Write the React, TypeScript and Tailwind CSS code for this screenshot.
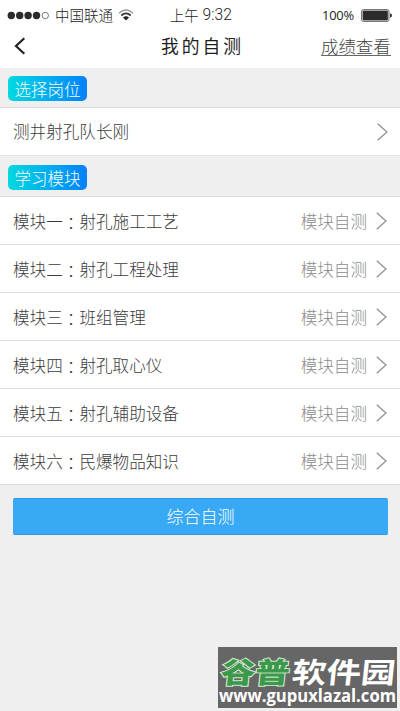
import React from "react";

const modules = [
  ["模块一", "射孔施工工艺"],
  ["模块二", "射孔工程处理"],
  ["模块三", "班组管理"],
  ["模块四", "射孔取心仪"],
  ["模块五", "射孔辅助设备"],
  ["模块六", "民爆物品知识"],
];

function Arrow() {
  return (
    <svg className="h-[18px] w-[11px] shrink-0" viewBox="0 0 11 18" fill="none" stroke="#8f8f8f" strokeWidth="1.2">
      <path d="M0.7 0.7 10 9 0.7 17.3" />
    </svg>
  );
}

function Tag({ children }: { children: React.ReactNode }) {
  return (
    <span className="flex h-[25px] w-[79px] items-center justify-center rounded-[5px] bg-linear-to-r from-[#08d8df] to-[#0c80fa] pt-px text-[16.5px] leading-none text-white">
      {children}
    </span>
  );
}

function StatusBar() {
  return (
    <div className="flex h-[30px] items-center pl-[7px] text-[#222]">
      <svg className="h-[9px] w-[42px]" viewBox="0 0 42 9" fill="#2b2b2b">
        <circle cx="4.3" cy="4.5" r="3.7" />
        <circle cx="12.7" cy="4.5" r="3.7" />
        <circle cx="21.1" cy="4.5" r="3.7" />
        <circle cx="29.5" cy="4.5" r="3.7" />
        <circle cx="38.3" cy="4.5" r="3.2" fill="none" stroke="#555" strokeWidth="0.8" />
      </svg>
      <span className="ml-[6px] w-[59px] whitespace-nowrap text-[14.5px] leading-none">中国联通</span>
      <svg className="ml-[4px] h-[12px] w-[16px]" viewBox="0 0 16 12" fill="none">
        <path d="M1 4.2Q8-2.2 15 4.2" stroke="#999" strokeWidth="1.4" />
        <path d="M3.3 6.5Q8 2.2 12.7 6.5" stroke="#333" strokeWidth="1.7" />
        <path d="M5 8.4Q8 6 11 8.4L8 11.6Z" fill="#222" />
      </svg>
      <span className="ml-[36px] flex w-[64px] items-center whitespace-nowrap text-[14.3px] leading-none">
        上午
        <span className="ml-[4px] pt-[2px] font-['Roboto',sans-serif] text-[15.6px]">9:32</span>
      </span>
      <span className="ml-[88px] w-[34px] whitespace-nowrap pt-px font-['Open_Sans',sans-serif] text-[12.9px] leading-none font-normal tracking-[-0.2px]">100%</span>
      <svg className="ml-[5px] h-[13px] w-[31px]" viewBox="0 0 31 13">
        <rect x="0.5" y="0.5" width="27.5" height="12" rx="2" fill="#ccc" stroke="#777" />
        <rect x="1.8" y="1.8" width="25" height="9.4" rx="1" fill="#2b2b2b" />
        <path d="M29 4.3Q31 4.8 31 6.5T29 8.7Z" fill="#333" />
      </svg>
    </div>
  );
}

export default function App() {
  return (
    <div className="relative h-[711px] w-[400px] overflow-hidden bg-[#efefef] font-['Noto_Sans_CJK_SC',sans-serif] font-light text-[#3c3c3c]">
      <header className="h-[68px] bg-white">
        <StatusBar />
        <div className="flex h-[32px] items-center pl-[14px]">
          <svg className="h-[18px] w-[12px]" viewBox="0 0 12 18" fill="none" stroke="#222" strokeWidth="2.2">
            <path d="M10.3 1.3 2 9l8.3 7.7" />
          </svg>
          <h1 className="ml-[135px] w-[84px] whitespace-nowrap text-[17.8px] leading-none font-normal tracking-[3px] text-[#1d1d1d]">我的自测</h1>
          <a className="ml-[76px] h-[19px] w-[70px] whitespace-nowrap border-b border-[#666] text-[17.4px] leading-none text-[#444]">成绩查看</a>
        </div>
      </header>
      <div className="flex h-[40px] border-b border-[#dcdcdc] pt-[8px] pl-[8px]">
        <Tag>选择岗位</Tag>
      </div>
      <div className="flex h-[47px] items-center justify-between bg-white pr-[12px] pl-[13px] text-[16.6px]">
        <span>测井射孔队长刚</span>
        <Arrow />
      </div>
      <div className="flex h-[42px] border-y border-[#dcdcdc] border-t-[#e5e5e5] pt-[9px] pl-[8px]">
        <Tag>学习模块</Tag>
      </div>
      <div>
        {modules.map(([name, title]) => (
          <div key={name} className="flex h-[48px] items-center border-b border-[#dcdcdc] bg-white pt-px pr-[13px] pl-[13px] text-[16.6px]">
            <span className="flex items-center whitespace-nowrap pt-px">
              <span>{name}</span>
              <span className="pt-[4px] font-['Noto_Sans_CJK_TC',sans-serif] leading-none">：</span>
              <span>{title}</span>
            </span>
            <span className="mr-[9px] ml-auto pt-px text-[#8c8c8c]">模块自测</span>
            <Arrow />
          </div>
        ))}
      </div>
      <button className="mt-[13px] ml-[13px] flex h-[37px] w-[375px] items-center justify-center rounded-[2px] border-y border-[#3498df] bg-[#38a9f4] pb-[2px] text-[17px] leading-none text-white">
        综合自测
      </button>
      <div className="absolute top-[647px] left-[218px] h-[61px] w-[179px] bg-[#666]">
        <svg className="h-[61px] w-[179px] overflow-visible" viewBox="0 0 179 61">
          <g fontFamily="Noto Sans CJK SC" fontWeight="900" transform="translate(3 36) skewX(-6)">
            <g transform="scale(1.13 0.94)" fontSize="30.5">
              <text x="-1" y="0" fill="#3c984a" stroke="#d5eed4" strokeWidth="2" paintOrder="stroke">谷普</text>
            </g>
            <g transform="translate(70 0) scale(1.13 0.94)" fontSize="30.5" fontWeight="700">
              <text x="0" y="0" fill="#fff">软件园</text>
            </g>
          </g>
          <text x="1" y="55" fontFamily="Open Sans" fontWeight="700" fontSize="17" fill="#fff" textLength="177" lengthAdjust="spacingAndGlyphs">www.gupuxlazal.com</text>
        </svg>
      </div>
    </div>
  );
}
